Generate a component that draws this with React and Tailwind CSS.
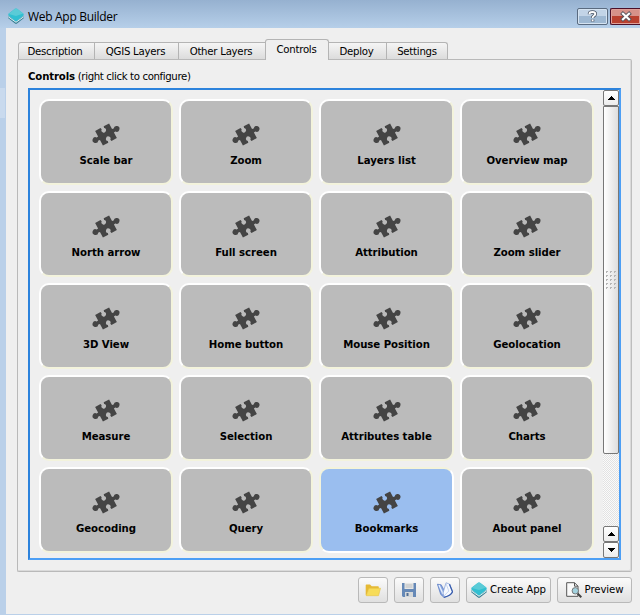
import React from "react";

const UI = "font-['DejaVu_Sans_Condensed','DejaVu_Sans','Noto_Sans',sans-serif]";

const controls = [
  "Scale bar", "Zoom", "Layers list", "Overview map",
  "North arrow", "Full screen", "Attribution", "Zoom slider",
  "3D View", "Home button", "Mouse Position", "Geolocation",
  "Measure", "Selection", "Attributes table", "Charts",
  "Geocoding", "Query", "Bookmarks", "About panel",
];

function Puzzle() {
  return (
    <svg className="block h-[28px] w-[30px] shrink-0" viewBox="-15 -13.5 30 28">
      <path
        transform="rotate(-28)"
        fill="#444"
        d="M-7.9 -8.3H-1.8L-1.4 -6.6A2.3 2.3 0 1 0 1.4 -6.6L1.8 -8.3H7.9V-2L9.6 -1.7A2.9 2.9 0 1 1 9.6 1.7L7.9 2V8.3H1.8L1.4 6.6A2.3 2.3 0 1 0 -1.4 6.6L-1.8 8.3H-7.9V2L-9.6 1.7A2.9 2.9 0 1 1 -9.6 -1.7L-7.9 -2Z"
      />
    </svg>
  );
}

function Diamond({ className }) {
  return (
    <svg className={className} viewBox="0 0 16 16">
      <path d="M.3 7.8 L8 14 L15.7 7.8 V10.2 L9 15.6 Q8 16.2 7 15.6 L.3 10.2Z" fill="#397f93" />
      <path d="M.3 8.8 L8 14.3 L15.7 8.8" fill="none" stroke="#eefafa" strokeWidth=".9" />
      <path d="M7 .7 Q8 .1 9 .7 L15.3 5.6 Q16.1 6.8 15.3 7.8 L9 12.9 Q8 13.5 7 12.9 L.7 7.8 Q-.1 6.8 .7 5.6Z" fill="#31bfd1" />
      <path d="M7 .7 Q8 .1 9 .7 L15.3 5.6 L8 8 L.7 6Z" fill="#5acbd7" />
    </svg>
  );
}

function Card({ name }) {
  const on = name === "Bookmarks";
  return (
    <div
      className={
        "flex h-[86px] flex-col items-center rounded-[10px] border-2 pt-[20px] " +
        (on
          ? "border-t-[#f3f3dc] border-l-[#f3f3dc] border-r-white border-b-white bg-[#9abeef]"
          : "border-t-white border-l-white border-r-[#f3f3dc] border-b-[#f3f3dc] bg-[#bbbbbb]")
      }
    >
      <Puzzle />
      <span className="mt-[4px] text-[11.3px] leading-[16px] font-bold tracking-[-0.05px] whitespace-nowrap text-black">{name}</span>
    </div>
  );
}

function Tab({ label, className }) {
  return (
    <div className={"flex h-[17px] items-center justify-center border-t border-r border-[#b4b4b4] bg-linear-to-b from-[#f5f5f5] to-[#dcdcdc] pt-px text-[11.3px] leading-[15px] tracking-[-0.25px] whitespace-nowrap " + className}>
      {label}
    </div>
  );
}

function ArrowButton({ down }) {
  return (
    <div className="flex h-4 w-4 shrink-0 items-center justify-center rounded-[2px] border border-[#777] bg-linear-to-b from-white to-[#ececec]">
      <svg className="h-1 w-[7px]" viewBox="0 0 7 4" shapeRendering="crispEdges">
        <path d={down ? "M0 0H7L3.5 4Z" : "M0 4H7L3.5 0Z"} />
      </svg>
    </div>
  );
}

function Grip() {
  return (
    <svg className="h-[19px] w-[11px]" viewBox="0 0 11 19" shapeRendering="crispEdges">
      {[0, 4, 8].map((x) =>
        [0, 4, 8, 12, 16].map((y) => (
          <path key={x + "-" + y} d={`M${x} ${y}h2v1h-1v1h-1z`} fill="#b5b5b5" />
        ))
      )}
    </svg>
  );
}

function ScrollBar() {
  return (
    <div className="flex w-4 flex-col bg-[repeating-conic-gradient(#e2e2e2_0_25%,#fafafa_0_50%)] bg-[length:2px_2px]">
      <ArrowButton />
      <div className="flex h-[348px] shrink-0 items-center justify-center rounded-b-[2px] border border-[#777] bg-linear-to-r from-white to-[#dedede]">
        <Grip />
      </div>
      <div className="flex-1" />
      <ArrowButton />
      <ArrowButton down />
    </div>
  );
}

function ToolButton({ className, children }) {
  return (
    <button className={"flex h-[26px] items-center justify-center rounded-[3px] border border-[#b9b9b9] bg-linear-to-b from-[#fbfbfb] to-[#e0e0e0] text-[11.3px] tracking-[-0.1px] whitespace-nowrap " + className}>
      {children}
    </button>
  );
}

export default function App() {
  return (
    <div className={"flex h-[615px] w-[640px] flex-col overflow-hidden bg-[#bad0e9] text-black " + UI}>
      <header className="flex h-[28px] shrink-0 items-start bg-linear-to-b from-[#96b1d0] to-[#b6cfe9]">
        <Diamond className="mt-[8px] ml-[8px] h-4 w-4 shrink-0" />
        <span className="mt-[8px] ml-1 flex-1 font-['Open_Sans','Noto_Sans',sans-serif] text-[12px] leading-[17px] tracking-[-0.3px] whitespace-nowrap">Web App Builder</span>
        <div className="mt-[8px] flex h-[17px] w-[31px] items-center justify-center rounded-[2px] border border-[#5a6b80] bg-linear-to-b from-[#c2d4e7] from-50% to-[#9eb8d2] to-50% shadow-[inset_0_0_0_1px_#d5e3f1]">
          <svg className="h-[13px] w-[11px]" viewBox="0 0 11 13" fill="none">
            <path d="M2.5 4.2 V3.6 Q2.7 2 5.4 2 Q8.3 2 8.3 4 Q8.3 5.2 6.7 6 Q5.6 6.6 5.6 8 M5.6 9.6v2" stroke="#4b5565" strokeWidth="3.4" />
            <path d="M2.5 4.2 V3.6 Q2.7 2 5.4 2 Q8.3 2 8.3 4 Q8.3 5.2 6.7 6 Q5.6 6.6 5.6 8 M5.6 9.6v1.7" stroke="white" strokeWidth="1.9" />
          </svg>
        </div>
        <div className="mt-[8px] ml-[2px] flex h-[17px] w-[30px] items-center justify-center rounded-l-[2px] border border-r-0 border-[#4b1028] bg-linear-to-b from-[#d69189] from-50% to-[#b9402f] to-50% shadow-[inset_0_0_0_1px_#df9f98]">
          <svg className="h-[11px] w-[12px]" viewBox="0 0 12 11" fill="none">
            <path d="M1.5 1.5 L10.5 9.5 M10.5 1.5 L1.5 9.5" stroke="#57545c" strokeWidth="4" />
            <path d="M2.2 2 L9.8 9 M9.8 2 L2.2 9" stroke="white" strokeWidth="2.2" />
          </svg>
        </div>
      </header>

      <div className="flex h-[586px] shrink-0">
        <div className="w-[6px] shrink-0 pt-[60px]">
          <div className="h-[30px] w-[5px] bg-[#c9daee]" />
        </div>
        <main className="flex flex-1 flex-col bg-[#efefef] pl-[11px]">
          <nav className="flex h-[31px] shrink-0 items-end pl-px">
            <Tab label="Description" className="w-[77px] rounded-tl-[3px] border-l pr-[3px]" />
            <Tab label="QGIS Layers" className="w-[84px] pr-[2px]" />
            <Tab label="Other Layers" className="w-[86px] border-r-0 pr-[2px]" />
            <div className="z-10 -mb-px flex h-[21px] w-[64px] items-center justify-center rounded-t-[3px] border border-b-0 border-[#b4b4b4] bg-[#efefef] pt-px pr-px text-[11.3px] tracking-[-0.25px]">
              Controls
            </div>
            <Tab label="Deploy" className="w-[58px] pr-[2px]" />
            <Tab label="Settings" className="w-[61px] rounded-tr-[3px]" />
          </nav>

          <section className="flex h-[513px] w-[615px] shrink-0 flex-col rounded-[2px] border border-[#b9b9b9] border-r-[#bdbdbd] pl-[10px] shadow-[inset_-1px_-1px_0_#dadada]">
            <p className="h-[28px] pt-[9px] text-[11.3px] leading-[16px] tracking-[-0.36px] whitespace-nowrap">
              <b className="tracking-[-0.15px]">Controls</b> (right click to configure)
            </p>
            <div className="flex h-[472px] w-[593px] border-2 border-[#4d9ff5] border-t-[#2d83dc] border-l-[#2d83dc] bg-[#efefef] pl-[9px]">
              <div className="grid grid-cols-[134px_134px_135px_134px] content-start gap-[6px] pt-[9px]">
                {controls.map((c) => <Card key={c} name={c} />)}
              </div>
              <div className="ml-[9px] flex">
                <ScrollBar />
              </div>
            </div>
          </section>

          <footer className="flex gap-[6px] pt-[5px] pl-[341px]">
            <ToolButton className="w-[30px]">
              <svg className="h-4 w-4" viewBox="0 0 16 16">
                <path d="M.7 13V3.3Q.7 2.6 1.5 2.6H5L6.7 4.2H13Q13.8 4.2 13.8 5V7H4L1.3 13.7Z" fill="#e5b934" />
                <path d="M4 6.2H15.5L13.5 13.7H1.3Z" fill="#f7dc59" stroke="#e8c343" strokeWidth=".6" />
              </svg>
            </ToolButton>
            <ToolButton className="w-[30px]">
              <svg className="h-4 w-4" viewBox="0 0 16 16">
                <path d="M1 1H15V15H2L1 14Z" fill="#6689b7" />
                <path d="M3.5 1H12.5V7H3.5Z" fill="#e7e7e5" />
                <path d="M4.5 3H11.5M4.5 5H11.5" stroke="#b9bdc1" />
                <path d="M4 10H12V15H4Z" fill="#d5d8d9" />
                <path d="M5.5 11H7.5V14H5.5Z" fill="#526f94" />
              </svg>
            </ToolButton>
            <ToolButton className="w-[30px]">
              <svg className="h-4 w-4" viewBox="0 0 16 16">
                <path d="M.4 2.2 L4.2 2.8 L7 8 V15.4 L3.7 12.4Z" fill="#88a5df" stroke="#5377c2" strokeWidth=".7" />
                <path d="M2 3 L6 12" stroke="#e7effc" strokeWidth="1.4" />
                <path d="M6 11 L9 .8 L12.5 2.1 L15.5 9.5 Q14.5 13.5 7 15.4Z" fill="#f7faff" stroke="#8aa5d9" strokeWidth=".8" />
                <path d="M12.5 2.3 L15.5 9.7 Q14.5 13.5 7 15.3" fill="none" stroke="#395dad" strokeWidth="1.3" />
                <path d="M9 1.5 L11.8 9 L7 14" fill="none" stroke="#c7d5ef" />
              </svg>
            </ToolButton>
            <ToolButton className="w-[85px] gap-[3px]">
              <Diamond className="h-4 w-4 shrink-0" />
              <span className="pt-px">Create App</span>
            </ToolButton>
            <ToolButton className="w-[75px] gap-[3px]">
              <svg className="h-4 w-4 shrink-0" viewBox="0 0 16 16">
                <path d="M.7 .7H8.5L12 4.2V14.3H.7Z" fill="#fafafa" stroke="#555" />
                <path d="M8.5 .7V4.2H12" fill="none" stroke="#555" />
                <path d="M11.5 11.5L15.3 15.3" stroke="#444" strokeWidth="2" />
                <circle cx="9.3" cy="8.8" r="3.2" fill="#a2d2df" stroke="#777" />
              </svg>
              <span className="pt-px">Preview</span>
            </ToolButton>
          </footer>
        </main>
      </div>
    </div>
  );
}
